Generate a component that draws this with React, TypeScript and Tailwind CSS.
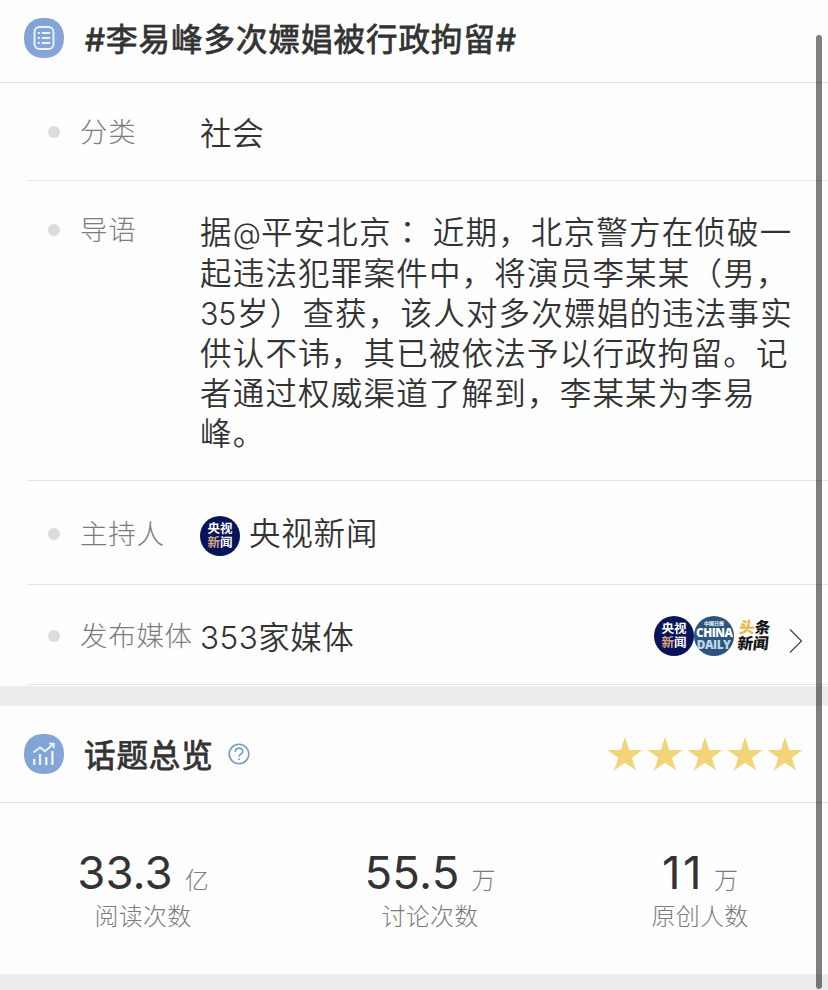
import type { ReactNode } from "react";

function Row({ label, height, labelTop, children }: { label: string; height: string; labelTop: string; children: ReactNode }) {
  return (
    <section className={`ml-[27px] flex border-b border-[#e4e4e4] ${height}`}>
      <div className={`flex h-10 w-[173px] shrink-0 items-center ${labelTop}`}>
        <span className="ml-[21px] size-3 rounded-full bg-[#dcdcdc]" />
        <span className="ml-5 pt-[2px] text-[27.5px] font-light tracking-[0.7px] whitespace-nowrap text-[#7c7c7c]">{label}</span>
      </div>
      {children}
    </section>
  );
}

function CctvBadge() {
  return (
    <span className="flex size-10 shrink-0 flex-col items-center justify-center rounded-full bg-[#07135a] text-[12.5px] leading-[14px] font-bold text-white">
      <span>央视</span>
      <span><span className="text-[#dba47d]">新</span>闻</span>
    </span>
  );
}

function Blob({ children }: { children: ReactNode }) {
  return (
    <svg viewBox="0 0 40 40" className="size-10 shrink-0" fill="none">
      <defs>
        <linearGradient id="blue" x1="0" y1="0" x2="1" y2="1">
          <stop stopColor="#7da4d6" />
          <stop offset="1" stopColor="#87a5dc" />
        </linearGradient>
      </defs>
      <path d="M20 0C32.5 0 40 7.5 40 20S32.5 40 20 40 0 32.5 0 20 7.5 0 20 0Z" fill="url(#blue)" />
      {children}
    </svg>
  );
}

function Stat({ value, unit, label, className, digits }: { value: string; unit: string; label: string; className: string; digits: string }) {
  return (
    <div className={`flex flex-col items-center ${className}`}>
      <div className="flex items-baseline whitespace-nowrap">
        <span className={`text-[45.5px] leading-[56px] text-[#333] ${digits}`}>{value}</span>
        <span className="text-[24px] font-light text-[#7c7c7c]">{unit}</span>
      </div>
      <span className="text-[24px] leading-8 font-light tracking-[0.3px] whitespace-nowrap text-[#7c7c7c]">{label}</span>
    </div>
  );
}

export default function App() {
  return (
    <main lang="zh-CN" className="relative h-[990px] w-[828px] overflow-hidden bg-[#fefefe] font-['Inter','Noto_Sans_CJK_SC',sans-serif] text-[#333]">
      <header className="flex h-[83px] items-center border-b border-[#e0e0e0] pb-[6px] pl-6">
        <Blob>
          <g stroke="#eaf4ff" strokeWidth="1.9" strokeLinecap="round">
            <rect x="10.5" y="9" width="19" height="22" rx="5" />
            <path d="M18.5 15h7M18.5 20h7M18.5 25h7M14.5 15h.6M14.5 20h.6M14.5 25h.6" />
          </g>
        </Blob>
        <h1 className="ml-[21px] pt-[3px] text-[31.5px] font-normal tracking-[1px] whitespace-nowrap [-webkit-text-stroke:0.8px_#333]">#李易峰多次嫖娼被行政拘留#</h1>
      </header>

      <Row label="分类" height="h-[98px]" labelTop="mt-[29px]">
        <p className="mt-[31px] text-[31.5px] leading-10 font-[350] tracking-[0.8px]">社会</p>
      </Row>
      <Row label="导语" height="h-[300px]" labelTop="mt-[29px]">
        <p className="mt-[29px] text-[31.5px] leading-10 font-[350] tracking-[1.2px] whitespace-nowrap">
          据<span className="text-[29px] tracking-[0px]">@</span>平安北京<span className="font-['Noto_Sans_CJK_TC',sans-serif]" lang="zh-TW">：</span><span className="tracking-[-0.5px]"> </span>近期，北京警方在侦破一<br />
          起违法犯罪案件中，将演员李某某（男，<br />
          <span className="mr-px text-[30.5px] tracking-[-0.3px]">35</span>岁）查获，该人对多次嫖娼的违法事实<br />
          供认不讳，其已被依法予以行政拘留。记<br />
          者通过权威渠道了解到，李某某为李易<br />
          峰。
        </p>
      </Row>
      <Row label="主持人" height="h-[104px]" labelTop="mt-[33px]">
        <div className="mt-[35px] flex h-10">
          <CctvBadge />
          <p className="-mt-[2px] ml-[9px] text-[31.5px] leading-10 font-[350] tracking-[0.8px]">央视新闻</p>
        </div>
      </Row>
      <Row label="发布媒体" height="h-[100px]" labelTop="mt-[31px]">
        <p className="mt-[33px] text-[31.5px] leading-10 font-[350] tracking-[0.5px]">353家媒体</p>
        <div className="mt-[31px] mr-[25px] ml-auto flex h-10">
          <CctvBadge />
          <span className="flex size-10 flex-col items-center rounded-full bg-[#2b5580] pt-1 font-bold text-white">
            <span className="text-[5px] leading-[6px]">中国日报</span>
            <span className="scale-x-[0.9] font-['Open_Sans',sans-serif] text-[13px] leading-[13px] font-extrabold tracking-[-0.5px]">CHINA</span>
            <span className="-mt-px scale-x-[0.9] font-['Open_Sans',sans-serif] text-[13px] leading-[13px] font-extrabold tracking-[-0.5px] text-[#bfd5e8]">DAILY</span>
          </span>
          <span className="flex w-10 -skew-x-6 flex-col items-center justify-center text-[15.5px] leading-[16px] font-black text-[#151515]">
            <span><span className="text-[#e9b94c]">头</span>条</span>
            <span>新闻</span>
          </span>
          <svg viewBox="0 0 14 26" className="mt-3 ml-[15px] h-[26px] w-[14px]" fill="none" stroke="#444" strokeWidth="1.2">
            <path d="M1 1.5 12.5 13 1 24.5" />
          </svg>
        </div>
      </Row>

      <div className="mt-px h-5 bg-[#ededed]" />

      <header className="flex h-[97px] items-center border-b border-[#e0e0e0] pr-[25px] pl-6">
        <Blob>
          <path d="M9.5 18.5 16 13.5l5 3.8 8-7M25 9.7h4.8v4.5" stroke="#eaf4ff" strokeWidth="1.8" />
          <path d="M10.2 25v6M16 20v11M22.3 23v8M28.4 17v14" stroke="#eaf4ff" strokeWidth="2.3" />
        </Blob>
        <h2 className="ml-5 pt-[3px] text-[31.5px] font-normal tracking-[0.9px] [-webkit-text-stroke:0.8px_#333]">话题总览</h2>
        <svg viewBox="0 0 22 22" className="ml-[14px] size-[22px]" fill="none" stroke="#6f9bd0" strokeWidth="1.6">
          <circle cx="11" cy="11" r="9.8" />
          <path d="M7.3 9C7.3 3.8 14.7 4 14.7 8.4c0 2.8-3.7 2.8-3.7 5.4M11 15.2v1.8" />
        </svg>
        <div className="ml-auto flex gap-[4px] pb-px">
          {[0, 1, 2, 3, 4].map((star) => (
            <svg key={star} viewBox="0 0 36 34" className="h-[34px] w-9" fill="#f3d577">
              <path d="M18 0 22.2 12.9H35.7L24.8 20.8 29 33.6 18 25.7 7 33.6 11.2 20.8.3 12.9H13.8Z" />
            </svg>
          ))}
        </div>
      </header>

      <section className="flex h-[171px] pt-[42px]">
        <Stat value="33.3" unit="亿" label="阅读次数" className="ml-[43px] w-[200px]" digits="mr-3 tracking-[0.1px]" />
        <Stat value="55.5" unit="万" label="讨论次数" className="ml-[87px] w-[200px]" digits="mr-3 tracking-[0.2px]" />
        <Stat value="11" unit="万" label="原创人数" className="ml-[70px] w-[200px]" digits="mr-[10px] tracking-[2.5px]" />
      </section>
      <div className="h-4 bg-[#ededed]" />
      <div className="absolute top-[35px] left-[816px] h-[954px] w-[6px] rounded-full bg-black/50" />
    </main>
  );
}
